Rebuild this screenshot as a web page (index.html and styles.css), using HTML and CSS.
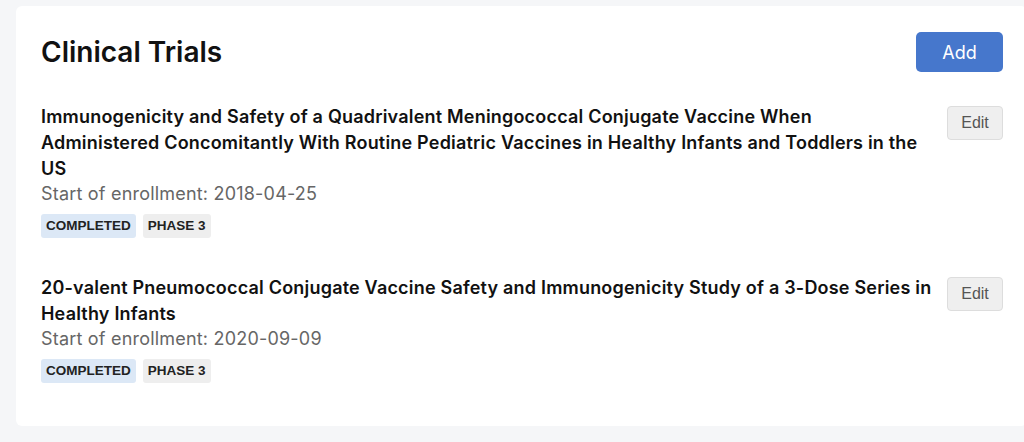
FILE: index.html
```html
<!DOCTYPE html>
<html lang="en">
<head>
  <meta charset="UTF-8">
  <title>Clinical Trials</title>
  <link rel="stylesheet" href="styles.css">
</head>
<body>

  <div class="card">
    <div class="card-header">
      <h1>Clinical Trials</h1>
      <button class="btn-add">Add</button>
    </div>

    <!-- trial list -->
    <div class="trial">
      <div class="trial-info">
        <div class="trial-title">Immunogenicity and Safety of a Quadrivalent Meningococcal Conjugate Vaccine When Administered Concomitantly With Routine Pediatric Vaccines in Healthy Infants and Toddlers in the US</div>
        <div class="trial-date">Start of enrollment: 2018-04-25</div>
        <div class="tags">
          <span class="tag tag-status">COMPLETED</span>
          <span class="tag">PHASE 3</span>
        </div>
      </div>
      <button class="btn-edit">Edit</button>
    </div>

    <div class="trial">
      <div class="trial-info">
        <div class="trial-title">20-valent Pneumococcal Conjugate Vaccine Safety and Immunogenicity Study of a 3-Dose Series in Healthy Infants</div>
        <div class="trial-date">Start of enrollment: 2020-09-09</div>
        <div class="tags">
          <span class="tag tag-status">COMPLETED</span>
          <span class="tag">PHASE 3</span>
        </div>
      </div>
      <button class="btn-edit">Edit</button>
    </div>
  </div>

</body>
</html>
```

FILE: styles.css
```css
body {
  margin: 0;
  padding: 6px 0 0 16px;
  background: #f5f6f8;
  font-family: Inter, "Noto Sans", sans-serif;
  color: #111;
  overflow: hidden;
}

.card {
  width: 962px;
  height: 372px;
  padding: 24px 24px 24px 25px;
  background: #fff;
  border-radius: 6px;
}

.card-header {
  display: flex;
  justify-content: space-between;
  align-items: center;
  margin: 2px 0 32px;
}

h1 {
  margin: 0;
  font-size: 28px;
  font-weight: 600;
}

.btn-add {
  width: 87px;
  height: 40px;
  border: none;
  border-radius: 5px;
  background: #4677cc;
  color: #fff;
  font-family: Inter, sans-serif;
  font-size: 18px;
}

.trial {
  display: flex;
  gap: 13px;
  margin-bottom: 37px;
}

.trial-info {
  flex: 1;
}

.trial-title {
  font-size: 18px;
  font-weight: 600;
  line-height: 26px;
  letter-spacing: 0.2px;
}

.trial-date {
  font-size: 18px;
  line-height: 24px;
  letter-spacing: 0.2px;
  color: #666;
}

.tags {
  display: flex;
  gap: 7px;
  margin-top: 8px;
}

.tag {
  padding: 0 5px;
  height: 24px;
  line-height: 24px;
  border-radius: 3px;
  background: #eeeeee;
  font-family: "Liberation Sans", Arial, sans-serif;
  font-size: 13.5px;
  font-weight: bold;
  color: #222;
}

.tag-status {
  background: #dce8f6;
}

.btn-edit {
  align-self: flex-start;
  width: 56px;
  height: 34px;
  margin-top: 2px;
  border: 1px solid #ddd;
  border-radius: 4px;
  background: #efefef;
  color: #555;
  font-family: "Liberation Sans", Arial, sans-serif;
  font-size: 16px;
}
```
